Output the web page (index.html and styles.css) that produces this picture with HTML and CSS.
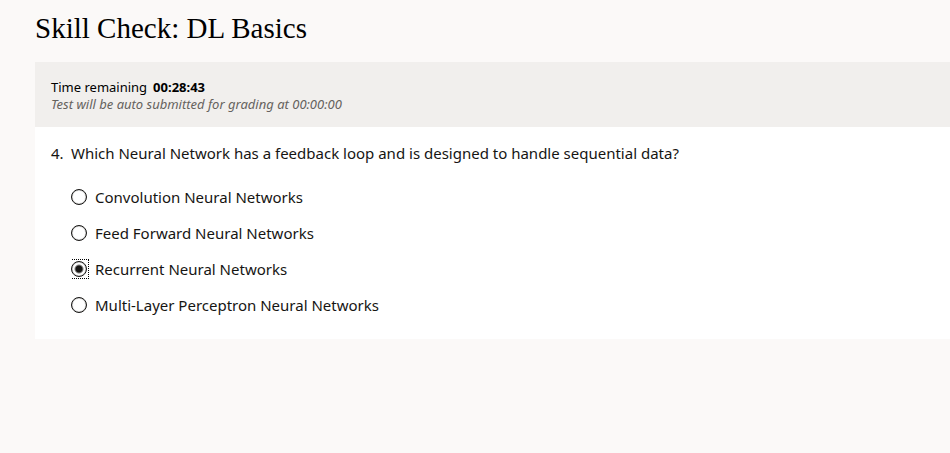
FILE: index.html
```html
<!DOCTYPE html>
<html lang="en">
<head>
<meta charset="utf-8">
<title>Skill Check: DL Basics</title>
<link rel="stylesheet" href="styles.css">
</head>
<body>
<main class="page">
  <h1 class="title">Skill Check: DL Basics</h1>
  <section class="test">
    <header class="timer">
      <p class="timer-line"><span>Time remaining</span><strong>00:28:43</strong></p>
      <p class="timer-note">Test will be auto submitted for grading at 00:00:00</p>
    </header>
    <form class="question">
      <span class="number">4.</span>
      <fieldset class="answers">
        <legend class="prompt">Which Neural Network has a feedback loop and is designed to handle sequential data?</legend>
        <label class="option"><input type="radio" name="answer">Convolution Neural Networks</label>
        <label class="option"><input type="radio" name="answer">Feed Forward Neural Networks</label>
        <label class="option"><input type="radio" name="answer" checked>Recurrent Neural Networks</label>
        <label class="option"><input type="radio" name="answer">Multi-Layer Perceptron Neural Networks</label>
      </fieldset>
    </form>
  </section>
</main>
</body>
</html>
```
FILE: styles.css
```css
* {
  box-sizing: border-box;
}

body {
  margin: 0;
  background: #fbf9f8;
  color: #161513;
  font-family: "Segoe UI", "Noto Sans", "Open Sans", sans-serif;
  font-size: 15px;
}

.page {
  padding: 8px 0 0 35px;
}

.title {
  margin: 0 0 14px;
  color: #000;
  font-family: Georgia, "Liberation Serif", serif;
  font-size: 29px;
  font-weight: 400;
  line-height: 40px;
}

.test {
  background: #fff;
}

.timer {
  padding: 17px 16px 14px;
  background: #f1efed;
  color: #000;
  font-size: 13px;
  line-height: 17px;
}

.timer p {
  margin: 0;
}

.timer-line {
  display: flex;
  gap: 6px;
}

.timer .timer-note {
  color: #65625d;
  font-style: italic;
}

.question {
  display: flex;
  gap: 8px;
  padding: 16px;
  line-height: 20px;
}

.number {
  width: 12px;
}

.answers {
  flex: 1;
  min-width: 0;
  margin: 0;
  padding: 0;
  border: 0;
}

.prompt {
  margin-bottom: 16px;
  padding: 0;
}

.option {
  display: flex;
  align-items: center;
  gap: 8px;
  padding: 8px 0;
}

.option input {
  appearance: none;
  position: relative;
  width: 16px;
  height: 16px;
  margin: 0;
  border: 1px solid #161513;
  border-radius: 50%;
  box-shadow: inset 0 0 1px #161513;
  outline: 0;
}

.option input:checked {
  background: radial-gradient(circle, #161513 3px, transparent 5px);
}

.option input:checked::after {
  content: "";
  position: absolute;
  inset: -3px -3px -3px 0;
  border: 1px dotted #000;
  border-left: 0;
}
```
